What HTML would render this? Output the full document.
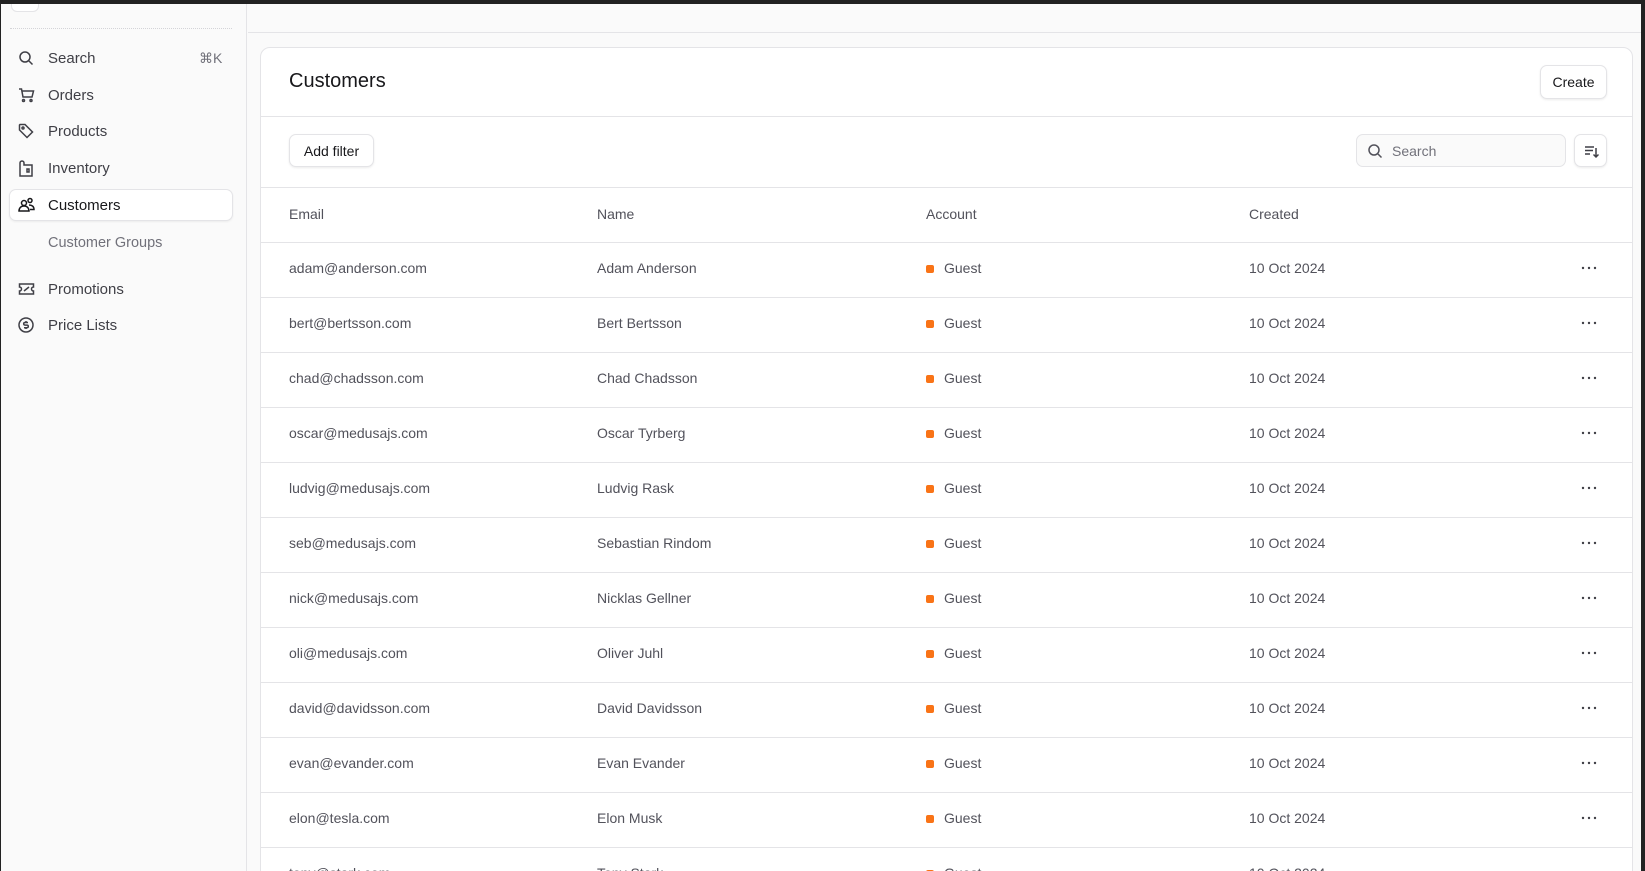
<!DOCTYPE html>
<html><head><style>
*{box-sizing:border-box;margin:0;padding:0}
body{width:1645px;height:871px;overflow:hidden;background:#222;font-family:"Liberation Sans",sans-serif;position:relative}
.app{position:absolute;left:1px;top:4px;width:1640px;height:867px;background:#fafafa;overflow:hidden}
.side{position:absolute;left:0;top:0;width:246px;height:100%;border-right:1px solid #e4e4e7;background:#fafafa}
.logo{position:absolute;left:10px;top:-10px;width:28px;height:18px;border:1px solid #e4e4e7;border-radius:6px;background:#fff}
.dots{position:absolute;left:9px;right:14px;top:24px;border-top:1px dotted #d4d4d8}
.nav{position:absolute;left:0;width:246px;height:32px;display:flex;align-items:center;font-size:15px;color:#3f3f46}
.nav svg{position:absolute;left:17px}
.nav span{position:absolute;left:47px}
.nav.act{left:8px;width:224px;background:#fff;border:1px solid #e4e4e7;border-radius:7px;box-shadow:0 1px 2px rgba(0,0,0,.06);color:#18181b}
.nav.act svg{left:8px}.nav.act span{left:38px}
.top{position:absolute;left:247px;right:0;top:0;height:29px;border-bottom:1px solid #e4e4e7}
.card{position:absolute;left:259px;top:43px;width:1373px;height:840px;background:#fff;border:1px solid #e4e4e7;border-radius:10px}
.btn{position:absolute;background:#fff;border:1px solid #e4e4e7;border-radius:7px;box-shadow:0 1px 2px rgba(0,0,0,.08);font-size:14px;color:#18181b;display:flex;align-items:center;justify-content:center}
.hl{position:absolute;left:0;right:0;border-top:1px solid #e4e4e7}
.cell{position:absolute;font-size:14px;color:#52525b;white-space:nowrap}
.dot{position:absolute;width:8px;height:8px;background:#f97316;border-radius:2px}
.more{position:absolute}
</style></head><body>
<div class="app">
<div class="side">
<div class="logo"></div><div class="dots"></div>
<div class="nav" style="top:38px"><svg width="16" height="16" viewBox="0 0 16 16" fill="none" stroke="#3f3f46" stroke-width="1.5"><circle cx="7" cy="7" r="5"/><path d="M11 11l3.5 3.5"/></svg><span>Search</span><span style="left:198px;color:#71717a;font-size:14px">⌘K</span></div>
<div class="nav" style="top:75px"><svg width="17" height="16" viewBox="0 0 17 16" fill="none" stroke="#3f3f46" stroke-width="1.5"><path d="M1 2h2.5l1.5 8h9l1.5-6H4.5"/><circle cx="5.5" cy="13.5" r="1"/><circle cx="13" cy="13.5" r="1"/></svg><span>Orders</span></div>
<div class="nav" style="top:111px"><svg width="16" height="16" viewBox="0 0 16 16" fill="none" stroke="#3f3f46" stroke-width="1.5"><path d="M1.5 2v5l7.5 7.5 5.5-5.5L7 1.5H2z"/><circle cx="5" cy="5" r="1"/></svg><span>Products</span></div>
<div class="nav" style="top:148px"><svg width="16" height="17" viewBox="0 0 16 17" fill="none" stroke="#3f3f46" stroke-width="1.5"><path d="M2 16V3a2 2 0 0 1 4 0v2h8v11H2z"/><path d="M9 9h2v3H9z"/></svg><span>Inventory</span></div>
<div class="nav act" style="top:185px"><svg width="17" height="16" viewBox="0 0 17 16" fill="none" stroke="#18181b" stroke-width="1.5"><circle cx="6" cy="6" r="2.5"/><circle cx="12" cy="3.5" r="2"/><path d="M1 14c0-3 2-5 5-5s5 2 5 5zM11 8c3 0 5 1.5 5 4.5h-4"/></svg><span>Customers</span></div>
<div class="nav" style="top:223px;color:#71717a;font-size:14.5px"><span>Customer Groups</span></div>
<div class="nav" style="top:269px"><svg width="17" height="16" viewBox="0 0 17 16" fill="none" stroke="#3f3f46" stroke-width="1.5"><path d="M1.5 3h14v3a2 2 0 0 0 0 4v3h-14v-3a2 2 0 0 0 0-4z"/><path d="M6 10l5-4"/></svg><span>Promotions</span></div>
<div class="nav" style="top:305px"><svg width="16" height="16" viewBox="0 0 16 16" fill="none" stroke="#3f3f46" stroke-width="1.5"><circle cx="8" cy="8" r="7"/><path d="M10 5.5H7a1.3 1.3 0 0 0 0 2.6h2a1.3 1.3 0 0 1 0 2.6H6M8 4v1.5M8 10.7V12"/></svg><span>Price Lists</span></div>
</div>
<div class="top"></div>
<div class="card">
<div style="position:absolute;left:28px;top:22px;font-size:20px;color:#18181b">Customers</div>
<div class="btn" style="left:1279px;top:17px;width:67px;height:34px">Create</div>
<div class="hl" style="top:68px"></div>
<div class="btn" style="left:28px;top:86px;width:85px;height:33px">Add filter</div>
<div class="btn" style="left:1095px;top:86px;width:210px;height:33px;background:#fafafa;justify-content:flex-start;color:#71717a;box-shadow:none"><svg style="margin:0 9px 0 10px" width="16" height="16" viewBox="0 0 16 16" fill="none" stroke="#52525b" stroke-width="1.5"><circle cx="7" cy="7" r="5"/><path d="M11 11l3.5 3.5"/></svg>Search</div>
<div class="btn" style="left:1313px;top:86px;width:33px;height:33px"><svg width="16" height="16" viewBox="0 0 16 16" fill="none" stroke="#3f3f46" stroke-width="1.5"><path d="M2 4h9M2 7.5h8M2 11h5M13 5v9M10.5 11.5 13 14l2.5-2.5"/></svg></div>
<div class="hl" style="top:139px"></div>
<div class="cell" style="left:28px;top:158px">Email</div>
<div class="cell" style="left:336px;top:158px">Name</div>
<div class="cell" style="left:665px;top:158px">Account</div>
<div class="cell" style="left:988px;top:158px">Created</div>
<div id="rows"></div>
</div>
</div>
<script>
var d=[["adam@anderson.com","Adam Anderson"],["bert@bertsson.com","Bert Bertsson"],["chad@chadsson.com","Chad Chadsson"],["oscar@medusajs.com","Oscar Tyrberg"],["ludvig@medusajs.com","Ludvig Rask"],["seb@medusajs.com","Sebastian Rindom"],["nick@medusajs.com","Nicklas Gellner"],["oli@medusajs.com","Oliver Juhl"],["david@davidsson.com","David Davidsson"],["evan@evander.com","Evan Evander"],["elon@tesla.com","Elon Musk"],["tony@stark.com","Tony Stark"]];
var h="";d.forEach(function(r,i){var t=194+i*55;h+='<div class="hl" style="top:'+t+'px"></div><div class="cell" style="left:28px;top:'+(t+18)+'px">'+r[0]+'</div><div class="cell" style="left:336px;top:'+(t+18)+'px">'+r[1]+'</div><div class="dot" style="left:665px;top:'+(t+23)+'px"></div><div class="cell" style="left:683px;top:'+(t+18)+'px">Guest</div><div class="cell" style="left:988px;top:'+(t+18)+'px">10 Oct 2024</div><svg class="more" style="left:1320px;top:'+(t+24)+'px" width="16" height="4" viewBox="0 0 16 4"><circle cx="2" cy="2" r="1.2" fill="#3f3f46"/><circle cx="8" cy="2" r="1.2" fill="#3f3f46"/><circle cx="14" cy="2" r="1.2" fill="#3f3f46"/></svg>';});
document.getElementById("rows").innerHTML=h;
</script>
</body></html>
